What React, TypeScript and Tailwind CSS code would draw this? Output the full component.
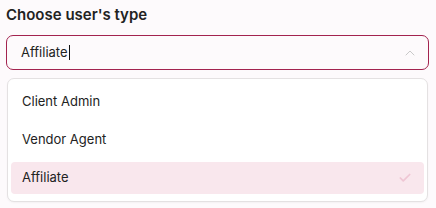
import { Check, ChevronUp } from 'lucide-react';

const options = ['Client Admin', 'Vendor Agent', 'Affiliate'];

export default function App() {
  const selected = 'Affiliate';

  return (
    <div className="w-[436px] h-[208px] bg-[#fdfafc] px-[6px] pt-[5px] font-['Inter',sans-serif] text-[#222222]">
      <h2 className="text-[15px] font-semibold leading-[20px] mb-[10px]">Choose user's type</h2>

      {/* Select box */}
      <div className="h-[35px] w-[423px] rounded-[7px] border border-[#a3234f] flex items-center pl-[14px] pr-[10px]">
        <span className="text-[13px]">{selected}</span>
        <span className="w-px h-[15px] bg-[#111] ml-[1px]"></span>
        <ChevronUp className="ml-auto w-[16px] h-[16px] text-[#c9c9c9]" strokeWidth={1.5} />
      </div>

      {/* Options list */}
      <div className="mt-[8px] ml-px w-[421px] rounded-[7px] border border-[#e4e1e2] bg-white px-[3px] pt-[7px] pb-[7px] flex flex-col gap-[6px] shadow-[0_1px_2px_rgba(0,0,0,0.04)]">
        {options.map((o) => (
          <div
            key={o}
            className={`h-[32px] rounded-[4px] flex items-center pl-[11px] pr-[12px] text-[13px] ${
              o === selected ? 'bg-[#f9e7ed]' : ''
            }`}
          >
            <span>{o}</span>
            {o === selected && (
              <Check className="ml-auto w-[14px] h-[14px] text-[#efc6d4]" strokeWidth={3} />
            )}
          </div>
        ))}
      </div>
    </div>
  );
}
